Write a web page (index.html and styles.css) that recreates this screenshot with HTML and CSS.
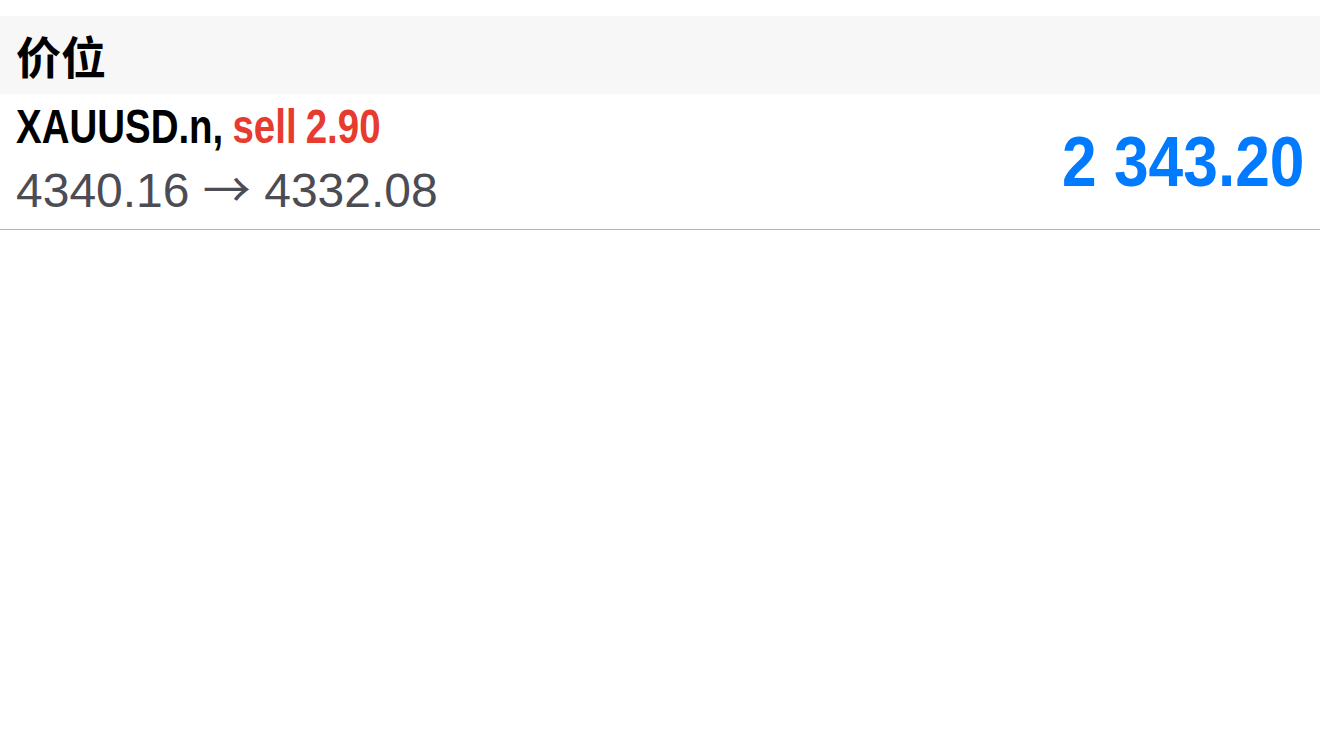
FILE: index.html
```html
<!DOCTYPE html>
<html>
<head>
<meta charset="utf-8">
<link rel="stylesheet" href="styles.css">
</head>
<body>
<div class="page">
  <div class="section-header">价位</div>
  <div class="row">
    <div class="info">
      <div class="title"><span class="condensed"><span class="symbol">XAUUSD.n,</span> <span class="sell">sell 2.90</span></span></div>
      <div class="prices">4340.16 <span class="arrow">→</span> 4332.08</div>
    </div>
    <div class="profit"><span class="condensed-right">2 343.20</span></div>
  </div>
</div>
</body>
</html>
```
FILE: styles.css
```css
html, body {
  margin: 0;
  padding: 0;
  background: #ffffff;
}
.page {
  padding-top: 16px;
  font-family: "Liberation Sans", Arial, "Noto Sans CJK SC", sans-serif;
}
.section-header {
  background: #f7f7f7;
  height: 78px;
  box-sizing: border-box;
  padding: 0 16px;
  display: flex;
  align-items: center;
  font-family: "Noto Sans CJK SC", sans-serif;
  font-weight: 700;
  font-size: 45px;
  color: #000;
}
.row {
  display: flex;
  align-items: center;
  justify-content: space-between;
  height: 136px;
  box-sizing: border-box;
  padding: 0 16px;
  border-bottom: 1px solid #b3b3b3;
}
.info {
  display: flex;
  flex-direction: column;
  padding-bottom: 4px;
}
.title {
  font-family: "Liberation Sans", Arial, sans-serif;
  font-weight: 700;
  font-size: 49px;
  line-height: 58px;
  color: #000;
  white-space: nowrap;
}
.condensed {
  display: inline-block;
  transform: scaleX(0.785);
  transform-origin: left center;
  word-spacing: -2px;
}
.sell {
  color: #e63b2e;
}
.prices {
  font-family: "Liberation Sans", Arial, sans-serif;
  font-size: 48px;
  line-height: 62px;
  color: #4c4c54;
  white-space: nowrap;
}
.arrow {
  font-family: "Noto Sans CJK SC", sans-serif;
  font-size: 48px;
}
.profit {
  font-family: "Liberation Sans", Arial, sans-serif;
  font-weight: 700;
  font-size: 70px;
  color: #007aff;
  white-space: nowrap;
}
.condensed-right {
  display: inline-block;
  transform: scaleX(0.89);
  transform-origin: right center;
}
```
